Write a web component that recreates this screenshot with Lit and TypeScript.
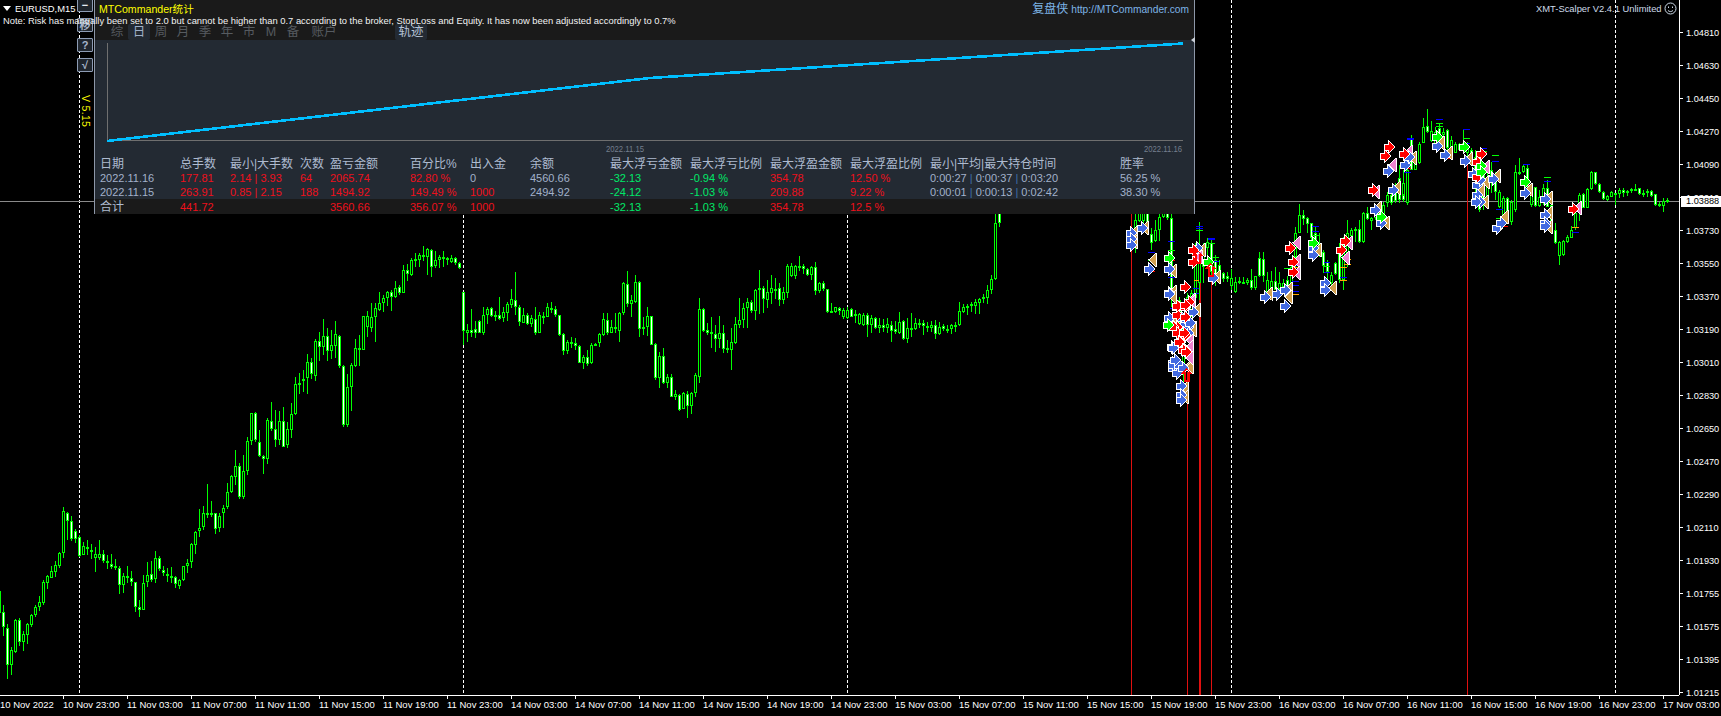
import { LitElement, html, css, svg } from "lit";
import { customElement } from "lit/decorators.js";

type C = [number, number, number, number, number];
const seg = (kStart: number, y0: number, s: string): C[] =>
  s.trim().split(/[,\n]+/).filter((r) => r.trim()).map((r, i) => {
    const [t, b, h, l] = r.trim().split(/\s+/).map((v) => Math.round(y0 + Number(v) / 3));
    return [kStart + i, t, b, h, l];
  });

const candles: C[] = [
  ...seg(-1, 210, `1143 1210 1143 1210`),
  ...seg(0, 210, `1207 1252 1185 1278,1255 1365 1243 1406,1321 1365 1311 1395,1230 1325 1228 1330,1230 1295 1224 1308,1273 1295 1263 1323,1243 1274 1240 1302,1216 1245 1213 1252,1192 1214 1186 1222,1177 1191 1159 1202,1117 1178 1110 1185,1099 1118 1095 1137,1084 1103 1068 1105,1066 1085 1052 1102,1030 1067 1027 1073,904 1030 892 1044,908 932 905 990,932 986 918 992,964 986 957 1000,980 1037 975 1040,1008 1034 995 1036,1010 1018 990 1035,1019 1027 1003 1047,1031 1043 1010 1086,1031 1043 990 1050,1031 1053 1020 1060,1052 1060 1035 1077,1061 1070 1032 1078,1069 1073 1047 1081,1073 1126 1068 1152,1099 1126 1088 1149,1097 1105 1068 1118,1105 1117 1083 1128,1117 1192 1115 1206,1192 1201 1170 1221,1118 1201 1095 1201,1096 1117 1057 1132,1093 1111 1052 1115,1045 1108 1024 1118,1045 1078 1038 1082,1079 1090 1068 1098,1092 1096 1075 1115,1097 1102 1072 1118,1100 1123 1097 1135,1111 1127 1108 1137,1069 1111 1068 1114,1058 1069 1046 1090,1003 1057 1000 1074,965 1004 963 1032,955 964 898 980,910 952 888 960,910 914 823 923,910 914 873 920,910 956 908 972,918 955 910 965,895 910 885 953,847 892 820 898,799 847 795 850,767 802 720 825,769 862 760 868,784 860 735 866,694 784 682 795,610 694 610 705,610 691 605 695,695 737 660 740,739 748 735 792,631 748 624 762,634 658 576 662,656 689 600 710,634 689 603 705,634 710 591 712,658 706 636 715,613 659 580 684,523 613 502 616,519 524 488 553,508 514 480 545,457 505 432 552,457 493 445 508,394 497 388 513,394 412 365 452,379 412 327 434,379 422 353 452,406 422 360 448,373 407 333 445,377 467 375 475,469 644 465 650,532 644 492 650,466 530 460 602,415 467 388 470,415 421 376 467,319 421 318 421,319 352 304 380,322 353 280 365,295 322 278 395,280 299 247 302,265 280 255 305,247 265 243 287,245 262 241 302,233 262 213 264,232 250 225 255,179 250 166 250,181 193 163 212,149 194 145 197,148 152 130 170,136 149 128 170,136 140 108 152,117 140 113 195,121 170 118 200,151 167 124 174,142 151 136 173,142 146 124 170,145 150 140 166,143 155 135 160,145 160 140 166,159 174 155 178`),
  ...seg(115, 200, `277 392 277 435,391 398 372 425,389 400 328 410,388 400 362 414,363 398 360 400,344 400 320 405,328 344 322 372,325 347 320 350,346 349 332 362,346 356 292 360,337 354 322 365,313 338 305 362,298 315 268 325,299 320 216 345,320 365 315 378,344 368 323 370,344 371 340 375,354 371 345 380,356 398 322 405,344 398 335 400,348 352 335 372,322 350 310 352,325 330 305 340,328 346 318 350,346 404 344 408,403 452 400 465,425 452 420 462,425 428 410 445,428 439 415 450,439 488 435 490,472 488 465 506,472 491 450 498,435 490 430 491,432 436 428 438,403 430 400 440,358 404 340 408,361 400 338 405,382 398 360 400,380 388 340 398,340 392 335 425,249 340 246 345,253 312 213 320,301 312 285 352,247 306 226 310,246 386 243 410,381 386 350 405,349 380 322 408,349 434 348 436,433 533 430 540,468 535 455 565,468 548 445 552,532 548 523 565,532 590 522 592,583 590 570 600,585 630 583 632,579 626 575 628,583 617 572 654,580 617 575 642,526 580 520 592,328 530 295 548,328 394 325 396,391 400 368 405,396 400 350 445,402 416 375 455,400 416 348 445,400 446 375 458,443 451 420 460,427 451 385 510,373 430 352 432,361 375 295 385,325 361 308 385,307 325 295 385,307 332 300 338,270 332 268 360,265 270 210 342,265 298 258 340,277 300 240 323,265 278 225 312,268 270 235 298,265 300 250 318,277 300 262 312,198 278 192 295,198 228 190 232,199 228 195 238,198 202 168 212,199 206 192 222,208 224 205 228,202 224 198 240,202 272 186 285,250 272 245 278,250 268 243 272,268 335 268 338,334 338 310 340,322 335 322 340,325 334 322 345,331 351 325 358,331 353 320 358,328 350 325 352,343 346 330 370,343 373 340 375,346 375 340 378,346 375 340 410,355 374 345 400,355 385 350 388,376 383 355 398,376 383 358 395,373 383 355 398,376 392 362 425,388 396 362 402,365 398 335 402,364 416 360 420,385 418 355 428,384 385 340 410,370 386 355 390,369 371 358 385,369 378 360 405,378 381 365 395,376 384 362 395,376 403 360 418,381 402 365 405,379 386 372 392,387 389 375 398,376 388 372 402,375 378 365 395,334 376 306 378,322 336 312 340,317 323 313 345,313 318 305 335,307 318 296 342,296 308 295 342,292 298 282 310,270 293 255 312,236 270 225 283,68 236 40 240,0 68 0 80`),
  ...seg(283, 200, `60 110 0 158,20 62 0 65,20 62 0 90,20 70 0 105,102 128 85 150,90 122 60 125,52 90 20 122,20 52 0 55,20 55 0 60,55 290 0 320,270 310 260 330,300 360 290 370,360 500 345 560,290 360 280 380,280 340 270 350,150 295 130 310,140 250 65 300,150 200 130 250,125 145 115 200,130 215 120 230,180 230 165 258,195 225 180 240,218 238 215 245,228 236 215 245,235 258 208 270,247 276 230 280,244 248 232 252,246 248 230 250,240 248 235 255,240 264 208 270,228 264 228 270,175 228 155 230,178 228 155 245,240 278 215 295,242 272 212 275,242 270 200 250,248 268 215 270,250 262 238 278,240 290 228 292,200 270 190 275,98 170 80 205,45 98 12 100,45 58 30 75,55 72 50 100,70 115 68 130,100 132 80 170,130 165 100 170,155 198 150 220,185 215 180 245,225 250 215 255,190 222 185 225,160 240 130 250,140 240 110 270,100 160 60 200,90 108 85 125,88 92 80 125,88 125 60 130,38 125 35 128,38 58 22 60,55 62 50 90,30 55 25 60,30 66 20 70,15 45 5 50,-15 8 -25 20,-15 10 -40 15,-30 3 -50 8,-65 0 -105 10,-15 0 -45 5,-75 10 -90 15`),
  ...seg(350, 90, `280 315 240 318,240 280 200 285,145 240 135 240,210 240 200 240,162 218 155 222,112 158 85 160,108 126 57 130,124 152 92 155,125 165 110 170,115 135 98 140,125 135 115 140,120 175 118 200,150 178 138 180,162 188 155 190,162 180 160 182,160 180 118 185,170 190 155 200,180 200 175 220,200 255 180 320,240 360 230 365,255 330 235 360,270 335 240 345,240 270 215 310,275 305 245 330,305 350 300 355,325 380 318 385,325 395 320 398,335 395 330 405,245 360 225 365,245 250 205 255,228 245 222 250,235 290 225 305,290 345 285 350,292 347 290 350,320 348 300 350,295 330 283 345,295 350 270 350,345 420 340 425,420 460 400 462,456 498 452 525,452 496 450 498,440 456 435 460,420 444 408 445,370 415 345 420,315 370 310 392,312 353 310 355,298 353 295 355,245 298 243 300,247 283 245 285,283 305 278 308,305 327 303 330,318 330 315 332,305 320 302 322,308 311 308 345,300 312 295 325,300 308 295 322,304 310 300 318,297 301 293 308,296 300 282 303,295 313 293 315,309 313 300 322,303 307 298 322,302 318 300 320,312 344 312 347,343 347 335 352,332 347 325 365,331 333 325 338`),
];

const isBear = (i: number) => {
  const c = candles[i];
  const n = candles[i + 1];
  if (!n) return false;
  const dTop = Math.min(Math.abs(c[1] - n[1]), Math.abs(c[1] - n[2]));
  const dBot = Math.min(Math.abs(c[2] - n[1]), Math.abs(c[2] - n[2]));
  return dBot < dTop;
};

const col = (k: number) => 3 + 4 * k;
let wicks = "", bodies = "", fillW = "", fillB = "";
candles.forEach((c, i) => {
  const x = col(c[0]);
  wicks += `M${x} ${c[3]}h1V${c[4]}h-1z`;
  const h = Math.max(c[2] - c[1], 2);
  bodies += `M${x - 1} ${c[1]}h3v${h}h-3z`;
  if (h > 2) {
    const inner = `M${x} ${c[1] + 1}h1v${h - 2}h-1z`;
    if (isBear(i)) fillW += inner; else fillB += inner;
  }
});

const z4 = (x: number, y: number): [number, number] => [1100 + x / 3, 200 + y / 3];
const z9 = (x: number, y: number): [number, number] => [1400 + x / 3, 90 + y / 3];
const z12 = (x: number, y: number): [number, number] => [1160 + x / 3, 290 + y / 3];
const z3 = (x: number, y: number): [number, number] => [1120 + x * 0.3833, y / 3];
type P = [number, number];

const blue: P[] = [
  ...([[92,100],[92,118],[92,136],[126,83],[148,208],[207,208],[207,280],[207,355],[243,558],[243,585],[243,600],[340,235],[290,145],[280,335],[265,380],[265,400],[495,290],[530,282],[555,270],[555,317],[640,145],[640,165],[675,250],[675,270],[825,30],[842,70],[215,440],[218,490],[218,505],[232,520],[245,355]] as P[]).map(([x, y]) => z4(x, y)),
  ...([[14,225],[28,200],[110,168],[135,195],[195,212],[218,252],[230,285],[230,315],[240,270],[240,335],[228,335],[278,268],[290,415],[302,400],[375,310],[435,328],[435,375],[435,400],[435,408]] as P[]).map(([x, y]) => z9(x, y)),
  ...([[28,12],[100,65],[28,85],[75,105],[40,175],[50,115],[38,225],[58,225],[70,235],[45,210],[90,100]] as P[]).map(([x, y]) => z12(x, y)),
  ...([[700,512],[712,570],[743,495],[755,470]] as P[]).map(([x, y]) => z3(x, y)),
];
const tan: P[] = [
  ...([[103,100],[103,125],[135,83],[160,181],[220,212],[220,275],[220,360],[255,565],[255,590],[352,230],[305,150],[292,330],[280,385],[508,282],[568,268],[567,290],[655,150],[700,265],[835,25],[857,68],[265,500]] as P[]).map(([x, y]) => z4(x, y)),
  ...([[40,205],[122,160],[148,190],[207,207],[258,275],[242,300],[255,335],[292,258],[315,380],[388,300],[448,323],[448,368],[448,410]] as P[]).map(([x, y]) => z9(x, y)),
  ...([[110,60],[100,120],[90,230],[40,20]] as P[]).map(([x, y]) => z12(x, y)),
  ...([[722,565],[765,475]] as P[]).map(([x, y]) => z3(x, y)),
];
const red: P[] = [
  ...([[255,262],[280,150],[280,187],[570,145],[578,187],[578,215],[735,122],[722,150],[232,320],[232,345],[255,320],[268,305],[222,380],[232,380],[255,405],[240,425],[255,450]] as P[]).map(([x, y]) => z4(x, y)),
  ...([[12,192],[243,192],[230,215],[230,260],[518,358]] as P[]).map(([x, y]) => z9(x, y)),
  ...([[50,48],[75,45],[40,110],[52,130],[72,130],[58,155],[68,180],[78,185],[75,80]] as P[]).map(([x, y]) => z12(x, y)),
  ...([[660,570],[692,468],[703,440]] as P[]).map(([x, y]) => z3(x, y)),
];
const pink: P[] = [
  ...([[296,170],[590,130],[590,182],[590,220],[748,130],[738,175],[275,300],[270,420],[270,470]] as P[]).map(([x, y]) => z4(x, y)),
  ...([[28,187],[257,232],[533,355]] as P[]).map(([x, y]) => z9(x, y)),
  ...([[95,35],[90,170],[90,205]] as P[]).map(([x, y]) => z12(x, y)),
  ...([[668,575],[712,495]] as P[]).map(([x, y]) => z3(x, y)),
];
const lime: P[] = [
  ...([[207,175],[325,185],[640,130],[843,50],[205,375]] as P[]).map(([x, y]) => z4(x, y)),
  ...([[110,140],[192,172],[242,228],[242,245],[375,275]] as P[]).map(([x, y]) => z9(x, y)),
];
const upArrows: P[] = [z4(262, 525), z4(332, 210), z4(295, 170)];

const D = { b: "#0000ff", r: "#ff0000", g: "#00ff00", o: "#ffa500" } as const;
type Dash = [number, number, number, keyof typeof D];
const dashes: Dash[] = [
  ...([[288,78,20,"b"],[288,84,20,"b"],[288,90,20,"g"],[205,122,20,"b"],[205,232,20,"b"],[205,150,20,"g"],[205,180,20,"r"],[283,240,14,"o"],[278,265,19,"b"],[278,280,19,"b"],[325,113,20,"b"],[325,118,20,"b"],[325,130,20,"g"],[335,170,20,"g"],[335,182,20,"b"],[635,78,20,"b"],[635,92,20,"b"],[635,105,20,"g"],[672,185,18,"b"],[672,216,18,"b"],[672,197,18,"g"],[732,178,20,"o"],[732,193,20,"o"],[720,202,20,"o"],[720,232,20,"b"],[720,240,20,"o"],[575,195,20,"b"],[575,242,20,"b"],[575,255,20,"b"],[575,272,20,"b"],[575,283,20,"o"],[575,200,20,"o"],[552,205,20,"g"],[550,320,20,"g"],[143,181,22,"g"],[143,155,22,"b"],[155,212,10,"r"],[210,325,15,"b"]] as Dash[]).map(([x, y, w, c]): Dash => { const p = z4(x, y); return [p[0], p[1], w / 3, c]; }),
  ...([[22,143,20,"b"],[22,147,20,"b"],[108,88,22,"b"],[108,100,22,"g"],[108,108,22,"g"],[190,118,22,"b"],[190,145,22,"g"],[190,160,22,"b"],[240,175,22,"b"],[240,182,22,"g"],[240,187,22,"r"],[275,214,22,"b"],[276,196,22,"g"],[288,358,22,"b"],[288,385,22,"g"],[305,408,18,"r"],[370,222,22,"b"],[375,285,20,"r"],[432,273,22,"b"],[432,262,22,"g"],[515,427,22,"b"],[515,412,22,"o"],[12,246,22,"b"],[12,235,22,"r"],[130,205,20,"r"]] as Dash[]).map(([x, y, w, c]): Dash => { const p = z9(x, y); return [p[0], p[1], w / 3, c]; }),
];

const prices = ["1.04810","1.04630","1.04450","1.04270","1.04090","1.03910","1.03730","1.03550","1.03370","1.03190","1.03010","1.02830","1.02650","1.02470","1.02290","1.02110","1.01930","1.01755","1.01575","1.01395","1.01215"];
const times = ["10 Nov 23:00","11 Nov 03:00","11 Nov 07:00","11 Nov 11:00","11 Nov 15:00","11 Nov 19:00","11 Nov 23:00","14 Nov 03:00","14 Nov 07:00","14 Nov 11:00","14 Nov 15:00","14 Nov 19:00","14 Nov 23:00","15 Nov 03:00","15 Nov 07:00","15 Nov 11:00","15 Nov 15:00","15 Nov 19:00","15 Nov 23:00","16 Nov 03:00","16 Nov 07:00","16 Nov 11:00","16 Nov 15:00","16 Nov 19:00","16 Nov 23:00","17 Nov 03:00"];
const redLines: [number, number, number][] = [[1131,213,1],[1187,372,1],[1199,250,2],[1211,267,1],[1467,150,1]];
const tabs = ["综","日","周","月","季","年","市","M","备"];

type Tone = "" | "r" | "g";
const cell = (t: string, tone: Tone = "") => html`<span class="cell ${tone}">${t}</span>`;
const pipes = (t: string, tone: Tone = "") => html`<span class="cell ${tone}">${t.split("|").map((p, i) => html`${i ? html`<b class="pipe">|</b>` : ""}${p}`)}</span>`;

const ARROW = "-4,-2.5 0,-2.5 0,-5 5,0 0,5 0,2.5 -4,2.5";
const TRI = "3,-6 3,6 -4,0";

@customElement("app-root")
export class AppRoot extends LitElement {
  static styles = css`
    :host { display: block; width: 1721px; height: 716px; background: #000; position: relative; overflow: hidden; font-family: "Liberation Sans", "Noto Sans CJK SC", sans-serif; color: #fff; }
    .frame { display: grid; grid-template-columns: 1679px 42px; grid-template-rows: 695px 21px; height: 716px; }
    .plot { position: relative; overflow: hidden; }
    .plot svg.chart { display: block; }
    .prices { border-left: 1px solid #fff; padding-top: 16px; position: relative; font-size: 9.2px; box-sizing: border-box; }
    .price { height: 33px; display: flex; align-items: center; padding-left: 6px; position: relative; }
    .price::before { content: ""; position: absolute; left: 0; top: 16px; width: 3px; height: 1px; background: #fff; }
    .bid { position: absolute; left: 1px; top: 196px; width: 41px; height: 11px; background: #fff; color: #000; font-size: 9.2px; line-height: 11px; padding-left: 5px; box-sizing: border-box; }
    .times { grid-column: 1 / 3; display: flex; font-size: 9.5px; }
    .times-in { display: flex; width: 1679px; flex: none; border-top: 1px solid #fff; box-sizing: border-box; height: 21px; white-space: nowrap; }
    .t0 { width: 63px; flex: none; padding-top: 2px; line-height: 14px; }
    .t { width: 64px; flex: none; padding-top: 2px; line-height: 14px; position: relative; }
    .t::before { content: ""; position: absolute; left: 0; top: 0; width: 1px; height: 3px; background: #fff; }
    .symbol { position: absolute; left: 2px; top: 2px; font-size: 9.4px; line-height: 13px; display: flex; align-items: center; gap: 3px; }
    .symbol i { width: 0; height: 0; border-left: 4px solid transparent; border-right: 4px solid transparent; border-top: 5px solid #fff; margin: 0 1px; }
    .ea { position: absolute; left: 1536px; top: 2px; display: flex; align-items: center; gap: 2px; font-size: 9.4px; line-height: 13px; color: #cfdcea; white-space: nowrap; }
    .tools { position: absolute; left: 77px; top: -2px; display: flex; flex-direction: column; gap: 6px; z-index: 2; }
    .tool { width: 16px; height: 14px; box-sizing: border-box; border: 1px solid #8d9cb4; border-radius: 1px; background: #20262e; color: #a8b6cc; font-size: 11px; line-height: 12px; text-align: center; font-weight: bold; }
    .tool:first-child { color: #e6ebf2; }
    .version { position: absolute; left: 80px; top: 95px; writing-mode: vertical-rl; color: #ffff00; font-size: 10.5px; line-height: 12px; letter-spacing: .3px; z-index: 2; }
    .panel { position: absolute; left: 94px; top: 0; width: 1101px; height: 214px; box-sizing: border-box; border: 1px solid #8d97a8; border-top: 0; background: #1a1a1a; z-index: 1; display: flex; flex-direction: column; }
    .head { height: 24px; display: flex; justify-content: space-between; padding: 3px 5px 0 4px; box-sizing: border-box; line-height: 13px; }
    .title { color: #ffff00; font-size: 10.6px; }
    .link { color: #7db4e6; font-size: 10.2px; display: flex; gap: 3px; align-items: baseline; }
    .link b { font-weight: normal; font-size: 12px; }
    .tabs { height: 16px; display: flex; padding-left: 11px; font-size: 12.5px; line-height: 16px; color: #565b60; }
    .tab { width: 22px; text-align: center; box-sizing: border-box; }
    .tab.wide { width: 40px; }
    .tab.on { background: #232a33; color: #9fb0c8; border-radius: 2px; }
    .tab.track { margin-left: 51px; width: 32px; background: #232a33; color: #b6c4d8; border-radius: 2px; }
    .curve { height: 117px; background: #232a33; position: relative; }
    .curve svg { display: block; }
    .curve text { font-size: 9px; fill: #747f8e; font-family: "Liberation Sans", sans-serif; }
    .pin { position: absolute; right: -1px; top: -3px; width: 0; height: 0; border-top: 3px solid transparent; border-bottom: 3px solid transparent; border-right: 4px solid #c8ced6; }
    .table { display: grid; grid-template-columns: 80px 50px 70px 30px 80px 60px 60px 80px 80px 80px 80px 80px 190px 1fr; grid-auto-rows: 14px; background: #232a33; padding-left: 5px; line-height: 14px; flex: 1; font-size: 11px; color: #a2b1ca; }
    .cell { white-space: nowrap; overflow: visible; }
    .hd { font-size: 12px; color: #aebbd0; white-space: nowrap; }
    .r { color: #ee101c; }
    .g { color: #00e868; }
    .pipe { font-weight: normal; color: #3f6ea8; }
    .r .pipe { color: #ee101c; }
    .total { grid-column: 1 / -1; display: grid; grid-template-columns: 80px 50px 70px 30px 80px 60px 60px 80px 80px 80px 80px 80px 190px 1fr; background: #1a1a1a; margin-left: -5px; padding-left: 5px; padding-top: 1px; height: 15px; box-sizing: border-box; }
    .note { position: absolute; left: 3px; top: 14px; font-family: "Liberation Sans", sans-serif; font-size: 9.4px; line-height: 14px; white-space: nowrap; z-index: 3; color: #f2f2f2; }
  `;

  private marker(ref: string, p: P) {
    return svg`<use href="#${ref}" x=${Math.round(p[0])} y=${Math.round(p[1])}></use>`;
  }

  private arrowDef(id: string, color: string) {
    return svg`<g id=${id}><polygon points=${ARROW} fill="#fff" stroke="#fff" stroke-width="2" /><polygon points=${ARROW} fill=${color} /></g>`;
  }

  private triDef(id: string, color: string) {
    return svg`<g id=${id}><polygon points=${TRI} fill="#fff" stroke="#fff" stroke-width="1.4" /><polygon points=${TRI} fill=${color} /></g>`;
  }

  private chart() {
    return html`<svg class="chart" width="1679" height="695" viewBox="0 0 1679 695" shape-rendering="crispEdges">
      <defs>
        ${this.arrowDef("m-blue", "#4169e1")}
        ${this.arrowDef("m-red", "#ff0000")}
        ${this.arrowDef("m-lime", "#00ff00")}
        ${this.triDef("m-tan", "#d2a050")}
        ${this.triDef("m-pink", "#ee82d0")}
        <g id="m-up"><polygon points="0,-6 4,-2 2,-2 2,6 -2,6 -2,-2 -4,-2" fill="none" stroke="#ff0000" stroke-width="1.4" /></g>
      </defs>
      ${[79, 463, 847, 1231, 1615].map((x) => svg`<line x1=${x + 0.5} x2=${x + 0.5} y1="0" y2="695" stroke="#fff" stroke-dasharray="3 2" />`)}
      <rect x="0" y="201" width="1679" height="1" fill="#8a8a8a" />
      ${redLines.map(([x, y, w]) => svg`<rect x=${x} y=${y} width=${w} height=${695 - y} fill="#e01010" />`)}
      <path d=${wicks} fill="#00ff00" />
      <path d=${bodies} fill="#00ff00" />
      <path d=${fillW} fill="#fff" />
      <path d=${fillB} fill="#000" />
      ${dashes.map(([x, y, w, c]) => svg`<rect x=${Math.round(x)} y=${Math.round(y)} width=${Math.round(w)} height="1" fill=${D[c]} />`)}
      ${tan.map((p) => this.marker("m-tan", p))}
      ${pink.map((p) => this.marker("m-pink", p))}
      ${blue.map((p) => this.marker("m-blue", p))}
      ${red.map((p) => this.marker("m-red", p))}
      ${lime.map((p) => this.marker("m-lime", p))}
      ${upArrows.map((p) => this.marker("m-up", p))}
    </svg>`;
  }

  private panel() {
    return html`<section class="panel">
      <div class="head"><span class="title">MTCommander统计</span><span class="link"><b>复盘侠</b><span>http://MTCommander.com</span></span></div>
      <div class="tabs">
        ${tabs.map((t, i) => html`<span class="tab ${i === 1 ? "on" : ""}">${t}</span>`)}
        <span class="tab wide">账户</span>
        <span class="tab track">轨迹</span>
      </div>
      <div class="curve">
        <span class="pin"></span>
        <svg width="1099" height="117" viewBox="95 40 1099 117">
          <rect x="107" y="43" width="1" height="98" fill="#6f6f6f" shape-rendering="crispEdges" />
          <rect x="107" y="140" width="1076" height="1" fill="#6f6f6f" shape-rendering="crispEdges" />
          <polyline points="107,141 650,78 1183,43.5" fill="none" stroke="#00bfff" stroke-width="2.6" shape-rendering="crispEdges" />
          <text x="606" y="151.5" textLength="38" lengthAdjust="spacingAndGlyphs">2022.11.15</text>
          <text x="1144" y="151.5" textLength="38" lengthAdjust="spacingAndGlyphs">2022.11.16</text>
        </svg>
      </div>
      <div class="table">
        ${["日期","总手数","最小|大手数","次数","盈亏金额","百分比%","出入金","余额","最大浮亏金额","最大浮亏比例","最大浮盈金额","最大浮盈比例","最小|平均|最大持仓时间","胜率"].map((h) => html`<span class="hd">${h}</span>`)}
        ${cell("2022.11.16")}${cell("177.81","r")}${pipes("2.14 | 3.93","r")}${cell("64","r")}${cell("2065.74","r")}${cell("82.80 %","r")}${cell("0")}${cell("4560.66")}${cell("-32.13","g")}${cell("-0.94 %","g")}${cell("354.78","r")}${cell("12.50 %","r")}${pipes("0:00:27 | 0:00:37 | 0:03:20")}${cell("56.25 %")}
        ${cell("2022.11.15")}${cell("263.91","r")}${pipes("0.85 | 2.15","r")}${cell("188","r")}${cell("1494.92","r")}${cell("149.49 %","r")}${cell("1000","r")}${cell("2494.92")}${cell("-24.12","g")}${cell("-1.03 %","g")}${cell("209.88","r")}${cell("9.22 %","r")}${pipes("0:00:01 | 0:00:13 | 0:02:42")}${cell("38.30 %")}
        <div class="total">
          <span class="hd">合计</span>${cell("441.72","r")}<span></span><span></span>${cell("3560.66","r")}${cell("356.07 %","r")}${cell("1000","r")}<span></span>${cell("-32.13","g")}${cell("-1.03 %","g")}${cell("354.78","r")}${cell("12.5 %","r")}
        </div>
      </div>
    </section>`;
  }

  render() {
    return html`
      <div class="frame">
        <div class="plot">
          ${this.chart()}
          ${this.panel()}
          <div class="tools"><span class="tool">−</span><span class="tool">移</span><span class="tool">?</span><span class="tool">√</span></div>
          <div class="version">V 5.15</div>
          <div class="symbol"><i></i><span>EURUSD,M15</span></div>
        </div>
        <div class="prices">
          ${prices.map((p) => html`<div class="price">${p}</div>`)}
          <div class="bid">1.03888</div>
        </div>
        <div class="times"><div class="times-in"><span class="t0">10 Nov 2022</span>${times.map((t) => html`<span class="t">${t}</span>`)}</div></div>
      </div>
      <div class="ea">XMT-Scalper V2.4.1 Unlimited
        <svg width="13" height="13" viewBox="0 0 13 13" fill="none" stroke="#cfdcea"><circle cx="6.5" cy="6.5" r="5.5" /><path d="M4 8.5c1.5 1.4 3.5 1.4 5 0" /><path d="M4.5 4.5v1.5M8.5 4.5v1.5" /></svg>
      </div>
      <div class="note">Note: Risk has manually been set to 2.0 but cannot be higher than 0.7 according to the broker, StopLoss and Equity. It has now been adjusted accordingly to 0.7%</div>
    `;
  }
}
